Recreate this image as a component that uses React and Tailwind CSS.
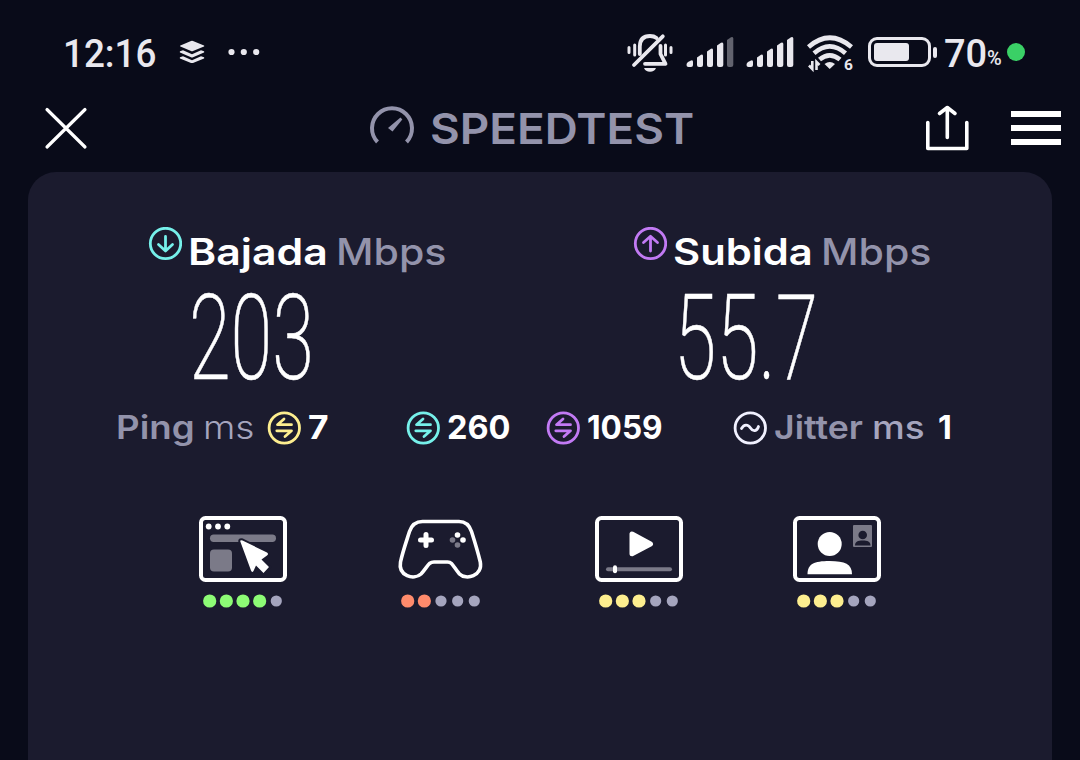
import { useLayoutEffect, useRef, useState } from "react";

// Text squeezed or stretched to fill a fixed width
function FitText({ className = "", width, children }) {
  const ref = useRef(null);
  const [scale, setScale] = useState(1);

  useLayoutEffect(() => {
    setScale(width / ref.current.offsetWidth);
  }, [width, children]);

  return (
    <span className={`block shrink-0 ${className}`} style={{ width }}>
      <span ref={ref} className="inline-block origin-left whitespace-nowrap" style={{ transform: `scaleX(${scale})` }}>
        {children}
      </span>
    </span>
  );
}

function Signal({ weak }) {
  return (
    <svg className="w-12 h-8 shrink-0" viewBox="0 0 48 32" fill="#e9e8ee">
      <path d="M0.5 29 Q0.5 27 2 26 L5 24.5 Q7 23.5 7 26 V29 Q7 31 5 31 H2.5 Q0.5 31 0.5 29Z" />
      <path d="M11 21.5 L15 18.8 Q17 17.8 17 20 V29 Q17 31 15 31 H13 Q11 31 11 29Z" />
      <path d="M21 15.5 L25 12.8 Q27 11.8 27 14 V29 Q27 31 25 31 H23 Q21 31 21 29Z" />
      <path d="M31 9.5 L35 6.8 Q37.3 5.8 37.3 8 V29 Q37.3 31 35 31 H33 Q31 31 31 29Z" />
      <path d="M41 4 L45 1.2 Q47.3 0.2 47.3 2.5 V29 Q47.3 31 45 31 H43 Q41 31 41 29Z" opacity={weak ? 0.4 : 1} />
    </svg>
  );
}

function StatusBar() {
  return (
    <div className="flex h-[104px] items-center pl-[63px] text-[#e9e8ee] font-['Roboto'] font-medium">
      <FitText width={93} className="text-[38px] leading-[42px] mt-[3px]">12:16</FitText>
      <svg className="ml-[23px] h-6 w-[26px]" viewBox="179 40 26 24" fill="#e9e8ee">
        <path d="M191 41 Q192 40.6 193 41 L204 45.5 Q204.6 46 204 46.5 L193 51 Q192 51.4 191 51 L180.4 46.5 Q179.6 46 180.4 45.5Z" />
        <path d="M180 51.3 L183 50.3 L192 54.3 L201 50.3 L204 51.3 Q204.6 52 204 52.5 L193 57.3 Q192 57.7 191 57.3 L180 52.5 Q179.5 52 180 51.3Z" />
        <path d="M180 57.3 L183 56.3 L192 60.3 L201 56.3 L204 57.3 Q204.6 58 204 58.5 L193 62.9 Q192 63.3 191 62.9 L180 58.5 Q179.5 58 180 57.3Z" />
      </svg>
      <svg className="ml-[23px] h-2 w-8" viewBox="0 0 32 8" fill="#e9e8ee">
        <circle cx="3.5" cy="4" r="3.1" />
        <circle cx="15.8" cy="4" r="3.1" />
        <circle cx="28.2" cy="4" r="3.1" />
      </svg>

      <svg className="ml-[366px] h-10 w-12 shrink-0" viewBox="626 32 48 40" fill="none" stroke="#e9e8ee" strokeWidth="3.8" strokeLinecap="round" strokeLinejoin="round">
        <path d="M639.8 54 V46.5 Q640 36 650 36 Q654 36 656.5 38" />
        <path d="M660.5 46 V54 L665.5 63.8 H645" />
        <path d="M662.8 36.3 L634 65" />
        <path d="M629 47.5 V52.5 M634.7 45 V55 M665.5 45 V55 M671 47.5 V52.5" strokeWidth="3" />
        <path d="M644 68 H656 Q654.5 71.8 650 71.8 Q645.5 71.8 644 68Z" fill="#e9e8ee" stroke="none" />
      </svg>
      <div className="ml-[12px] flex gap-3">
        <Signal weak />
        <Signal />
      </div>
      <svg className="ml-[12px] h-[38px] w-[48px] shrink-0 overflow-visible" viewBox="806 33 48 38" fill="none" stroke="#e9e8ee" strokeWidth="4.6">
        <path d="M808.5 47 Q829.7 28.5 851.5 47" />
        <path d="M814 53.3 Q829.7 39.5 845.5 53.3" />
        <path d="M819.5 59.6 Q829.7 51 840 59.6" />
        <path d="M824.5 64 Q829.7 60 835 64 L829.7 69Z" fill="#e9e8ee" stroke="none" />
        <path d="M812.3 61 V69 L809 65.5 M816.5 70 V62 L819.5 65" strokeWidth="2.6" />
        <text x="844" y="69.5" fill="#e9e8ee" stroke="none" fontFamily="Roboto" fontSize="15.5" fontWeight="700">6</text>
      </svg>
      <div className="ml-[14px] flex items-center gap-[2px]">
        <div className="h-[30px] w-[63px] rounded-[9px] border-3 border-[#e9e8ee] p-[3px]">
          <div className="h-[18px] w-[35px] rounded-[3px] bg-[#e9e8ee]" />
        </div>
        <span className="h-[11px] w-1 rounded-[2px] bg-[#e9e8ee]" />
      </div>
      <FitText width={43} className="ml-[7px] mt-[3px] text-[38px] leading-[42px]">70</FitText>
      <FitText width={15} className="mt-[12px] text-[20px] leading-6">%</FitText>
      <span className="ml-[5px] size-[18px] rounded-full bg-[#3ad066]" />
    </div>
  );
}

function Header() {
  return (
    <div className="flex h-12 items-center pl-[44px]">
      <svg className="size-11" viewBox="44 106 44 44" stroke="#fff" strokeWidth="3.2" strokeLinecap="round">
        <path d="M47 109.5 L85 147 M85 109.5 L47 147" />
      </svg>
      <svg className="ml-[281px] size-[46px]" viewBox="369 105 46 46" fill="none" stroke="#9393ab" strokeWidth="4">
        <path d="M377.5 142 A20 20 0 1 1 406.5 142" />
        <path d="M400.5 117.5 L402.3 119.5 L392.5 131.5 L388 128Z" fill="#9393ab" stroke="none" />
      </svg>
      <FitText width={264} className="ml-[15px] text-[43px] leading-[48px] font-['Inter'] font-semibold text-[#9393ab]">SPEEDTEST</FitText>
      <svg className="ml-[230px] h-12 w-[46px]" viewBox="924 104 46 48" fill="none" stroke="#fff" strokeWidth="3.6" strokeLinecap="round" strokeLinejoin="round">
        <path d="M927.8 122.5 V148.5 H966.8 V122.5" />
        <path d="M947.3 137.5 V108 M939.5 113.5 L947.3 107.5 L955 113.5" />
      </svg>
      <div className="ml-[41px] flex w-[50px] flex-col gap-2">
        <span className="h-[6px] bg-white" />
        <span className="h-[6px] bg-white" />
        <span className="h-[6px] bg-white" />
      </div>
    </div>
  );
}

function SpeedIcon({ up, color }) {
  return (
    <svg className="size-[34px] shrink-0" viewBox="0 0 34 34" fill="none" stroke={color} strokeWidth="2.8" strokeLinecap="round" strokeLinejoin="round">
      <circle cx="17.5" cy="16.5" r="15.2" />
      {up ? <path d="M17.5 24 V9.5 M10.5 15.5 L17.5 9.2 L24.5 15.5" /> : <path d="M17.5 9.5 V23.5 M10.5 17.5 L17.5 24 L24.5 17.5" />}
    </svg>
  );
}

function LatencyIcon({ color }) {
  return (
    <svg className="size-[34px] shrink-0" viewBox="0 0 34 34" fill="none" stroke={color} strokeWidth="2.8" strokeLinecap="round" strokeLinejoin="round">
      <circle cx="17.3" cy="17" r="15.2" />
      <path d="M24.5 13.7 H10.5 L17 8 M9.8 19.8 H24.5 L18 25.5" />
    </svg>
  );
}

function Speed({ up, color, label, value, valueWidth }) {
  return (
    <div className="w-[485px] shrink-0">
      <div className="flex h-[50px]">
        <SpeedIcon up={up} color={color} />
        <FitText width={140} className="ml-[6px] text-[37px] leading-[50px] font-['Inter'] font-semibold text-white">{label}</FitText>
        <FitText width={110} className="ml-[8px] text-[37px] leading-[50px] font-['Inter'] font-medium text-[#9393ab]">Mbps</FitText>
      </div>
      <FitText width={valueWidth} className="ml-[41px] mt-[3px] h-[118px] text-[118px] leading-[118px] font-['Roboto'] font-extralight text-white [-webkit-text-stroke:0.6px_white]">{value}</FitText>
    </div>
  );
}

function Dots({ color, score }) {
  return (
    <svg className="mt-[11px] h-[14px] w-[90px]" viewBox="0 0 90 14">
      {[0, 1, 2, 3, 4].map((i) => (
        <circle key={i} cx={11.7 + i * 16.65} cy="7" r={i < score ? 6.6 : 5.6} fill={i < score ? color : "#a5a5be"} />
      ))}
    </svg>
  );
}

function Activity({ color, score, children }) {
  return (
    <div className="w-[90px]">
      <svg className="h-[68px] w-[90px]" viewBox="0 0 90 68">{children}</svg>
      <Dots color={color} score={score} />
    </div>
  );
}

function Frame() {
  return <rect x="3" y="3" width="84" height="62" rx="4.5" fill="none" stroke="#fff" strokeWidth="4" />;
}

function App() {
  return (
    <div className="h-[760px] w-[1080px] overflow-hidden bg-[#090b19]">
      <StatusBar />
      <Header />
      <div className="mx-[28px] mt-5 h-[588px] rounded-t-[28px] bg-[#1b1b2e]">
        <div className="flex pt-[55px] pl-[120px]">
          <Speed color="#76f0ea" label="Bajada" value="203" valueWidth={125} />
          <Speed up color="#c27af4" label="Subida" value="55.7" valueWidth={144} />
        </div>

        <div className="mt-[7px] flex items-center pl-[88px] text-[32px] leading-[46px] font-['Inter'] font-bold text-white">
          <FitText width={79} className="font-semibold text-[#9393ab]">Ping</FitText>
          <FitText width={51} className="ml-[8px] font-light text-[#a5a5be]">ms</FitText>
          <span className="ml-[13px]"><LatencyIcon color="#fdee8f" /></span>
          <FitText width={21} className="ml-[7px]">7</FitText>
          <span className="ml-[77px]"><LatencyIcon color="#76f0ea" /></span>
          <FitText width={64} className="ml-[7px]">260</FitText>
          <span className="ml-[35px]"><LatencyIcon color="#c27af4" /></span>
          <FitText width={76} className="ml-[7px]">1059</FitText>
          <svg className="ml-[70px] size-[34px]" viewBox="0 0 34 34" fill="none" stroke="#f1f1ff" strokeWidth="2.8" strokeLinecap="round">
            <circle cx="17.3" cy="17" r="15.2" />
            <path d="M8.5 17.5 C11 13 15 13 17.5 17 C20 21 24 20.5 25.5 15.5" />
          </svg>
          <FitText width={89} className="ml-[7px] font-semibold text-[#9393ab]">Jitter</FitText>
          <FitText width={53} className="ml-[9px] font-medium text-[#a5a5be]">ms</FitText>
          <FitText width={14} className="ml-[13px]">1</FitText>
        </div>

        <div className="mt-[64px] flex gap-[108px] pl-[170px]">
          {/* browsing */}
          <Activity color="#8dfc75" score={4}>
            <Frame />
            <g fill="#fff">
              <circle cx="10.7" cy="11.5" r="2.9" />
              <circle cx="20" cy="11.5" r="2.9" />
              <circle cx="29.3" cy="11.5" r="2.9" />
            </g>
            <rect x="12" y="19.5" width="66" height="7.5" rx="3.7" fill="#7b7a88" />
            <rect x="12" y="34.5" width="22" height="22" rx="4" fill="#7b7a88" />
            <path d="M42.5 27 Q41.5 24.5 44.5 25.5 L69 37.5 Q71 39 69 40.5 L63.5 44.5 L71 52 L65.5 58 L58 50.5 L55.5 56 Q54 58 53 55.5Z" fill="#fff" stroke="#1b1b2e" strokeWidth="4" paintOrder="stroke" />
          </Activity>
          {/* gaming */}
          <Activity color="#ff8b6c" score={2}>
            <path d="M26.5 6.5 H63 C69.5 6.5 73.5 10.5 75.5 16.5 C79 27.5 82 37.5 84.3 47 C87 61 70 65.5 63.5 59 C60 55 57.5 50.5 55.5 48.5 Q54 47 51.5 47 H38 Q35.5 47 33.5 48.5 C31 51 28.5 55.5 25 59 C18 65.5 2 61 4.5 47 C6.5 37.5 10 27.5 13.5 16.5 C15.5 10.5 19.5 6.5 26.5 6.5Z" fill="none" stroke="#fff" strokeWidth="3.6" />
            <path d="M30 19.5 V30.5 M24.5 25 H35.5" stroke="#fff" strokeWidth="5" strokeLinecap="round" />
            <circle cx="61.5" cy="20" r="2.8" fill="#fff" />
            <circle cx="67" cy="25" r="2.8" fill="#fff" />
            <circle cx="56.5" cy="25" r="2.8" fill="#7b7a88" />
            <circle cx="61.5" cy="30" r="2.8" fill="#7b7a88" />
          </Activity>
          {/* streaming */}
          <Activity color="#fdee8f" score={3}>
            <Frame />
            <path d="M38 19 V38.8 L56.5 29Z" fill="#fff" stroke="#fff" strokeWidth="5" strokeLinejoin="round" />
            <rect x="12" y="52.3" width="66" height="4" rx="2" fill="#7b7a88" />
            <rect x="19" y="50.3" width="4" height="8" rx="2" fill="#fff" />
          </Activity>
          {/* video chat */}
          <Activity color="#fdee8f" score={3}>
            <Frame />
            <circle cx="37.7" cy="29" r="12" fill="#fff" />
            <path d="M15.5 59.3 C15.5 49 22 46 37.5 46 C53 46 60 49 60 59.3Z" fill="#fff" />
            <rect x="61" y="10" width="19" height="22" rx="1" fill="#7b7a88" />
            <circle cx="70.7" cy="20" r="4.3" fill="#1b1b2e" />
            <path d="M63 30.5 C63 26.5 66 25.5 70.7 25.5 C75.5 25.5 78.5 26.5 78.5 30.5Z" fill="#1b1b2e" />
          </Activity>
        </div>
      </div>
    </div>
  );
}

export default App;
